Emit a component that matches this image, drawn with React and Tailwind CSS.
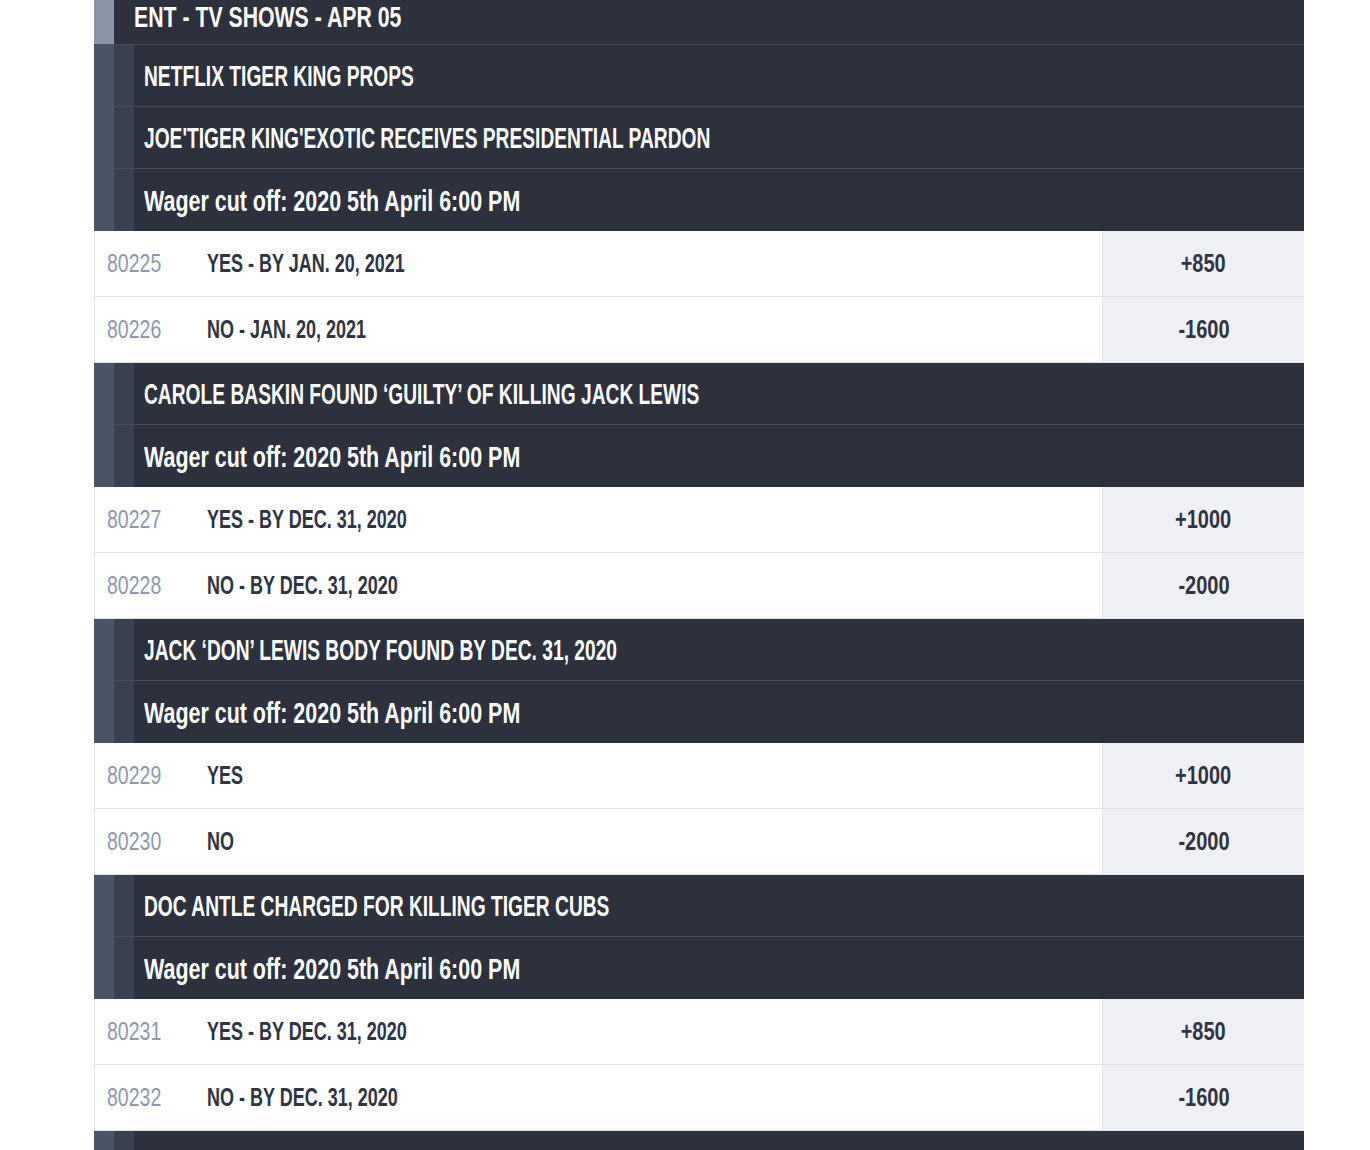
import React from "react";

const groups = [
  {
    titles: ["NETFLIX TIGER KING PROPS", "JOE'TIGER KING'EXOTIC RECEIVES PRESIDENTIAL PARDON"],
    options: [
      { id: "80225", label: "YES - BY JAN. 20, 2021", odds: "+850" },
      { id: "80226", label: "NO - JAN. 20, 2021", odds: "-1600" },
    ],
  },
  {
    titles: ["CAROLE BASKIN FOUND \u2018GUILTY\u2019 OF KILLING JACK LEWIS"],
    options: [
      { id: "80227", label: "YES - BY DEC. 31, 2020", odds: "+1000" },
      { id: "80228", label: "NO - BY DEC. 31, 2020", odds: "-2000" },
    ],
  },
  {
    titles: ["JACK \u2018DON\u2019 LEWIS BODY FOUND BY DEC. 31, 2020"],
    options: [
      { id: "80229", label: "YES", odds: "+1000" },
      { id: "80230", label: "NO", odds: "-2000" },
    ],
  },
  {
    titles: ["DOC ANTLE CHARGED FOR KILLING TIGER CUBS"],
    options: [
      { id: "80231", label: "YES - BY DEC. 31, 2020", odds: "+850" },
      { id: "80232", label: "NO - BY DEC. 31, 2020", odds: "-1600" },
    ],
  },
];

const font = "font-['Liberation_Sans',Arial,sans-serif]";

const DarkRow = ({ children, last }) => (
  <div className="flex h-[62px]">
    <div className="w-[20px] bg-[#4c5467]" />
    <div className={`flex flex-1 ${last ? "" : "border-b border-[#474d5b]"}`}>
      <div className="w-[20px] bg-[#3a404e]" />
      <div className="flex flex-1 items-center bg-[#2c313d] pl-[10px]">{children}</div>
    </div>
  </div>
);

const Title = ({ text }) => (
  <span className={`${font} inline-block origin-left scale-x-[0.64] whitespace-nowrap text-[30px] font-bold text-white`}>
    {text}
  </span>
);

const Cutoff = () => (
  <span className={`${font} inline-block origin-left scale-x-[0.715] whitespace-nowrap text-[30px] font-bold text-white`}>
    Wager cut off: 2020 5th April 6:00 PM
  </span>
);

const OptionRow = ({ opt }) => (
  <div className="flex h-[66px] border-b border-l border-[#e1e3e8] bg-white">
    <div className="flex w-[112px] items-center pl-[12px]">
      <span className={`${font} inline-block origin-left scale-x-[0.78] text-[25px] text-[#8e99ae]`}>{opt.id}</span>
    </div>
    <div className="flex flex-1 items-center">
      <span className={`${font} inline-block origin-left scale-x-[0.72] whitespace-nowrap text-[25px] font-bold text-[#2f3442]`}>
        {opt.label}
      </span>
    </div>
    <div className="flex w-[202px] items-center justify-center border-l border-[#e4e6eb] bg-[#eff0f3]">
      <span className={`${font} inline-block scale-x-[0.8] text-[25px] font-bold text-[#2f3442]`}>{opt.odds}</span>
    </div>
  </div>
);

export default function App() {
  return (
    <div className="h-[1150px] overflow-hidden bg-white pl-[94px]">
      <div className="w-[1210px]">
        <div className="flex h-[45px] border-b border-[#474d5b]">
          <div className="w-[20px] bg-[#8c95a8]" />
          <div className="flex flex-1 items-center bg-[#2c313d] pb-[9px] pl-[20px]">
            <span className={`${font} inline-block origin-left scale-x-[0.733] whitespace-nowrap text-[29px] font-bold leading-none text-white`}>
              ENT - TV SHOWS - APR 05
            </span>
          </div>
        </div>
        {groups.map((g, gi) => (
          <div key={gi}>
            {g.titles.map((t, ti) => (
              <DarkRow key={ti}>
                <Title text={t} />
              </DarkRow>
            ))}
            <DarkRow last>
              <Cutoff />
            </DarkRow>
            {g.options.map((o) => (
              <OptionRow key={o.id} opt={o} />
            ))}
          </div>
        ))}
        <DarkRow last>
          <span />
        </DarkRow>
      </div>
    </div>
  );
}
